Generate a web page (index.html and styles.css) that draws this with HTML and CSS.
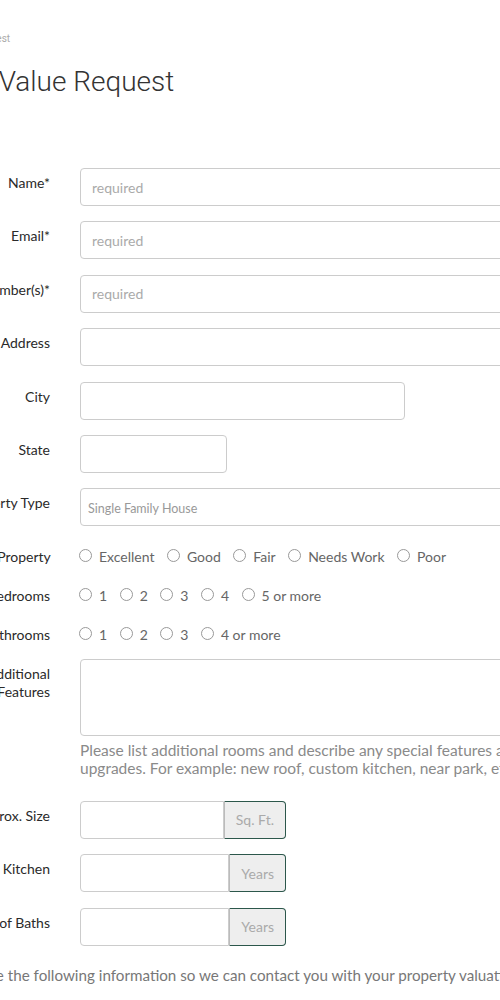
FILE: index.html
```html
<!DOCTYPE html>
<html lang="en">
<head>
    <meta charset="UTF-8">
    <meta name="viewport" content="width=device-width, initial-scale=1.0">
    <title>Home Value Request</title>
    <link rel="stylesheet" href="styles.css">
</head>
<body>
    <div class="page">
        <div class="crumb">Home Value Request</div>
        <h1 class="title">Home Value Request</h1>

        <form class="request-form">
            <div class="form-row">
                <label class="form-label" for="name">Name*</label>
                <div class="form-field"><input class="form-input" type="text" id="name" placeholder="required"></div>
            </div>
            <div class="form-row">
                <label class="form-label" for="email">Email*</label>
                <div class="form-field"><input class="form-input" type="email" id="email" placeholder="required"></div>
            </div>
            <div class="form-row">
                <label class="form-label" for="phone">Phone Number(s)*</label>
                <div class="form-field"><input class="form-input" type="text" id="phone" placeholder="required"></div>
            </div>
            <div class="form-row">
                <label class="form-label" for="address">Address</label>
                <div class="form-field"><input class="form-input" type="text" id="address"></div>
            </div>
            <div class="form-row">
                <label class="form-label" for="city">City</label>
                <div class="form-field"><input class="form-input input-city" type="text" id="city"></div>
            </div>
            <div class="form-row">
                <label class="form-label" for="state">State</label>
                <div class="form-field"><input class="form-input input-state" type="text" id="state"></div>
            </div>
            <div class="form-row">
                <label class="form-label" for="ptype">Property Type</label>
                <div class="form-field">
                    <select class="form-input form-select" id="ptype">
                        <option>Single Family House</option>
                        <option>Condo</option>
                        <option>Townhouse</option>
                    </select>
                </div>
            </div>

            <div class="form-row radio-row">
                <span class="form-label">Condition of Property</span>
                <div class="radio-group">
                    <label class="radio"><input type="radio" name="condition"> Excellent</label>
                    <label class="radio"><input type="radio" name="condition"> Good</label>
                    <label class="radio"><input type="radio" name="condition"> Fair</label>
                    <label class="radio"><input type="radio" name="condition"> Needs Work</label>
                    <label class="radio"><input type="radio" name="condition"> Poor</label>
                </div>
            </div>
            <div class="form-row radio-row">
                <span class="form-label">Bedrooms</span>
                <div class="radio-group">
                    <label class="radio"><input type="radio" name="beds"> 1</label>
                    <label class="radio"><input type="radio" name="beds"> 2</label>
                    <label class="radio"><input type="radio" name="beds"> 3</label>
                    <label class="radio"><input type="radio" name="beds"> 4</label>
                    <label class="radio"><input type="radio" name="beds"> 5 or more</label>
                </div>
            </div>
            <div class="form-row radio-row">
                <span class="form-label">Bathrooms</span>
                <div class="radio-group">
                    <label class="radio"><input type="radio" name="baths"> 1</label>
                    <label class="radio"><input type="radio" name="baths"> 2</label>
                    <label class="radio"><input type="radio" name="baths"> 3</label>
                    <label class="radio"><input type="radio" name="baths"> 4 or more</label>
                </div>
            </div>

            <div class="form-row features-row">
                <label class="form-label" for="features">Additional<br>Features</label>
                <div class="form-field">
                    <textarea class="form-input form-textarea" id="features"></textarea>
                    <p class="help-text">Please list additional rooms and describe any special features and upgrades. For example: new roof, custom kitchen, near park, etc.</p>
                </div>
            </div>

            <div class="form-row">
                <label class="form-label" for="size">Approx. Size</label>
                <div class="form-field">
                    <div class="input-group">
                        <input class="form-input" type="text" id="size">
                        <span class="addon">Sq. Ft.</span>
                    </div>
                </div>
            </div>
            <div class="form-row">
                <label class="form-label" for="kitchen">Age of Kitchen</label>
                <div class="form-field">
                    <div class="input-group">
                        <input class="form-input" type="text" id="kitchen">
                        <span class="addon">Years</span>
                    </div>
                </div>
            </div>
            <div class="form-row">
                <label class="form-label" for="bathsage">Age of Baths</label>
                <div class="form-field">
                    <div class="input-group">
                        <input class="form-input" type="text" id="bathsage">
                        <span class="addon">Years</span>
                    </div>
                </div>
            </div>
        </form>

        <p class="contact-note">Please provide the following information so we can contact you with your property valuation.</p>
    </div>
</body>
</html>
```

FILE: styles.css
```css
body, html {
    margin: 0;
    background: #fff;
    overflow: hidden;
    font-family: Lato, "Open Sans", sans-serif;
    color: #333;
}

.page {
    margin-left: -83px;
    width: 700px;
    padding-top: 32px;
}

.crumb {
    font-family: Roboto, sans-serif;
    font-size: 10px;
    line-height: 14px;
    color: #aaa;
}

.title {
    margin: 19px 0 0;
    font-family: Roboto, sans-serif;
    font-weight: 300;
    font-size: 28px;
    line-height: 34px;
    color: #333;
}

.request-form {
    margin-top: 69px;
}

.form-row {
    display: grid;
    grid-template-columns: 133px 1fr;
    column-gap: 30px;
    margin-bottom: 15.4px;
}

.form-label {
    text-align: right;
    padding-top: 6px;
    font-size: 14px;
    line-height: 18px;
    color: #2a2a2a;
    white-space: nowrap;
}

.form-input {
    box-sizing: border-box;
    width: 100%;
    height: 38px;
    padding: 0 11px;
    border: 1px solid #ccc;
    border-radius: 4px;
    background: #fff;
    font-family: Lato, sans-serif;
    font-size: 14px;
    color: #555;
}

.form-input::placeholder {
    color: #aaa;
}

.input-city {
    width: 325px;
}

.input-state {
    width: 147px;
}

.form-select {
    appearance: none;
    padding-left: 7px;
    padding-top: 2px;
    font-size: 12.5px;
    color: #999;
}

/* linhas de opcoes (radio) */
.radio-row {
    margin-bottom: 9px;
}

.radio-group {
    display: flex;
    flex-wrap: wrap;
    padding: 5px 0;
    margin-left: -1px;
}

.radio {
    display: flex;
    align-items: center;
    margin-right: 12.5px;
    font-size: 14px;
    line-height: 20px;
    color: #666;
    white-space: nowrap;
}

.radio input {
    appearance: none;
    width: 13px;
    height: 13px;
    margin: 0 7px 2px 0;
    border: 1px solid #999;
    border-radius: 50%;
    background: #fff;
}

.features-row {
    margin-bottom: 24px;
}

.form-textarea {
    display: block;
    height: 77px;
    resize: vertical;
}

.help-text {
    margin: 5px 0 0;
    font-size: 15.5px;
    line-height: 18px;
    color: #8a8a8a;
    width: 470px;
}

.input-group {
    display: flex;
    width: 206px;
}

.input-group .form-input {
    flex: 1;
    min-width: 0;
    border-radius: 4px 0 0 4px;
}

.addon {
    display: flex;
    align-items: center;
    padding: 0 11px;
    background: #eee;
    border: 1px solid #2c574b;
    border-left: 1px solid #bbb;
    border-radius: 0 4px 4px 0;
    font-size: 14px;
    color: #aaa;
}

.contact-note {
    margin: 19px 0 0 -10px;
    font-size: 15.2px;
    line-height: 20px;
    color: #777;
    white-space: nowrap;
}
```
